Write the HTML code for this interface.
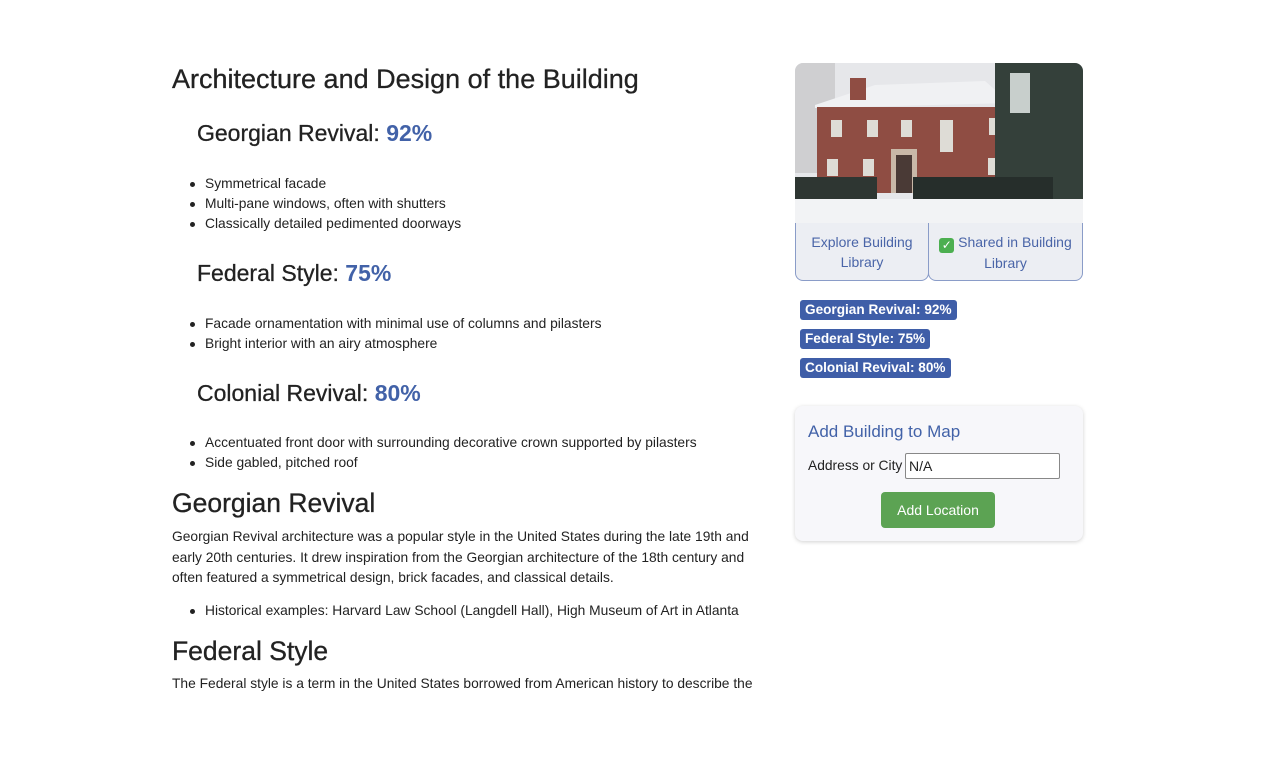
<!DOCTYPE html>
<html><head><meta charset="utf-8"><style>
body{margin:0;width:1270px;height:760px;background:#fff;font-family:"Liberation Sans",Arial,sans-serif;color:#222;position:relative;overflow:hidden}
.a{position:absolute;white-space:nowrap}
h1,h2,h3{margin:0;font-weight:normal}
.t{font-size:27px;-webkit-text-stroke:0.3px #222}
.s{font-size:23px;left:197px;-webkit-text-stroke:0.3px #222}
.s b{color:#4262a8;-webkit-text-stroke:0}
.big{font-size:26.5px;left:172px;-webkit-text-stroke:0.3px #222}
ul{margin:0;padding:0;list-style:none;position:absolute;left:190px;font-size:13.8px;line-height:20px}
ul li{padding-left:15px;position:relative}
ul li:before{content:"";position:absolute;left:0;top:8px;width:5px;height:5px;border-radius:50%;background:#222}
p{margin:0;position:absolute;left:172px;font-size:13.8px;line-height:20.5px;width:590px}
.card{position:absolute;left:795px;top:63px;width:288px;height:161px;border-radius:8px 8px 0 0;overflow:hidden}
.btn{position:absolute;top:223px;height:58px;background:#eceef3;border:1px solid #8a9cc8;border-top:none;border-radius:0 0 8px 8px;color:#4a65a8;font-size:14px;text-align:center;line-height:20px;padding-top:9px;box-sizing:border-box}
.tag{position:absolute;left:800px;height:20px;background:#3f5ea8;color:#fff;font-weight:bold;font-size:13.6px;line-height:20px;padding:0 5px;border-radius:3px}
</style></head><body>
<h1 class="a t" style="left:172px;top:64px">Architecture and Design of the Building</h1>
<h2 class="a s" style="top:120px">Georgian Revival: <b>92%</b></h2>
<ul style="top:174px"><li>Symmetrical facade</li><li>Multi-pane windows, often with shutters</li><li>Classically detailed pedimented doorways</li></ul>
<h2 class="a s" style="top:260px">Federal Style: <b>75%</b></h2>
<ul style="top:314px"><li>Facade ornamentation with minimal use of columns and pilasters</li><li>Bright interior with an airy atmosphere</li></ul>
<h2 class="a s" style="top:380px">Colonial Revival: <b>80%</b></h2>
<ul style="top:433px"><li>Accentuated front door with surrounding decorative crown supported by pilasters</li><li>Side gabled, pitched roof</li></ul>
<h2 class="a big" style="top:488px">Georgian Revival</h2>
<p style="top:527px">Georgian Revival architecture was a popular style in the United States during the late 19th and early 20th centuries. It drew inspiration from the Georgian architecture of the 18th century and often featured a symmetrical design, brick facades, and classical details.</p>
<ul style="top:601px"><li>Historical examples: Harvard Law School (Langdell Hall), High Museum of Art in Atlanta</li></ul>
<h2 class="a big" style="top:636px">Federal Style</h2>
<p style="top:674px">The Federal style is a term in the United States borrowed from American history to describe the</p>

<div class="card">
<svg width="288" height="161" viewBox="0 0 288 161" style="display:block">
<rect width="288" height="161" fill="#e6e7ea"/>
<rect x="0" y="0" width="40" height="110" fill="#cfcfd1"/>
<polygon points="20,42 80,22 190,18 215,40 20,45" fill="#f0f1f3"/>
<rect x="22" y="44" width="195" height="86" fill="#8f4d43"/>
<rect x="55" y="15" width="16" height="22" fill="#8f4d43"/>
<g fill="#dedcd6"><rect x="36" y="57" width="11" height="17"/><rect x="72" y="57" width="11" height="17"/><rect x="106" y="57" width="11" height="17"/><rect x="145" y="57" width="13" height="32"/><rect x="194" y="55" width="11" height="17"/><rect x="32" y="96" width="11" height="17"/><rect x="68" y="96" width="11" height="17"/><rect x="193" y="95" width="11" height="17"/></g>
<rect x="96" y="86" width="26" height="44" fill="#c9b8a8"/>
<rect x="101" y="92" width="16" height="38" fill="#4a3a36"/>
<rect x="200" y="0" width="88" height="145" fill="#34403a"/>
<rect x="215" y="10" width="20" height="40" fill="#c8cfcc"/>
<rect x="0" y="114" width="82" height="24" fill="#2e3632"/>
<rect x="118" y="114" width="140" height="24" fill="#262e2b"/>
<rect x="0" y="136" width="288" height="25" fill="#f2f3f5"/>
</svg>
</div>
<div class="btn" style="left:795px;width:134px">Explore Building<br>Library</div>
<div class="btn" style="left:928px;width:155px"><span style="display:inline-block;width:15px;height:15px;background:#4caf50;border-radius:3px;color:#fff;font-size:12px;line-height:15px;vertical-align:-2px">✓</span> Shared in Building<br>Library</div>
<div class="tag" style="top:300px">Georgian Revival: 92%</div>
<div class="tag" style="top:329px">Federal Style: 75%</div>
<div class="tag" style="top:358px">Colonial Revival: 80%</div>

<div style="position:absolute;left:795px;top:406px;width:288px;height:135px;background:#f7f7fa;border-radius:8px;box-shadow:0 1px 4px rgba(0,0,0,.18)">
<div class="a" style="left:13px;top:16px;font-size:17px;color:#4262a8">Add Building to Map</div>
<div class="a" style="left:13px;top:52px;font-size:13.8px">Address or City</div>
<div class="a" style="left:110px;top:47px;width:150px;height:24px;border:1px solid #888;border-radius:2px;background:#fff;font-size:14px;line-height:24px;padding-left:3px">N/A</div>
<div class="a" style="left:86px;top:86px;width:114px;height:36px;background:#5ca353;border-radius:4px;color:#fff;font-size:14px;line-height:36px;text-align:center">Add Location</div>
</div>
</body></html>
